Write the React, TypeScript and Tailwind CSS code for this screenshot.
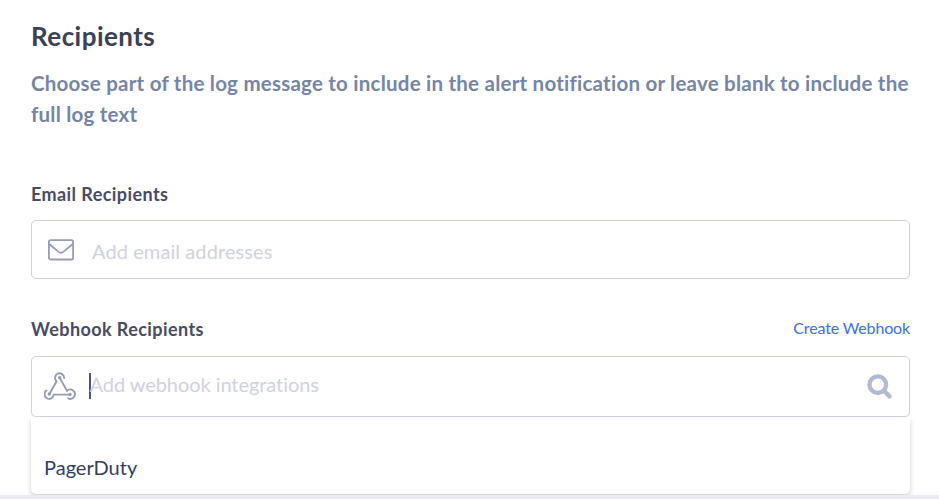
import type { ReactNode } from "react";

const integrations = ["PagerDuty"];

function MailIcon() {
  return (
    <svg width="26" height="22" viewBox="0 0 26 22" fill="none" stroke="#929db8" strokeWidth="1.8">
      <rect x="0.9" y="1.1" width="24.2" height="19.4" rx="1.8" />
      <path d="M1.2 5 L10.7 12.9 Q13 14.7 15.3 12.9 L24.8 5" />
    </svg>
  );
}

function WebhookIcon() {
  return (
    <svg
      width="32"
      height="28"
      viewBox="0 0 32 28"
      fill="none"
      stroke="#929db8"
      strokeWidth="1.9"
      strokeLinecap="round"
      strokeLinejoin="round"
    >
      <path d="M20.1 6 A4.5 4.5 0 1 0 12.6 9.2 L5.4 22" />
      <path d="M2.6 18.4 A4.6 4.6 0 1 0 9.7 22.6 L26 22.6" />
      <path d="M15.7 5.8 L23 18.9 A4.6 4.6 0 1 1 24.2 26.3" />
      <circle cx="15.7" cy="5.8" r="0.8" />
      <circle cx="5.4" cy="22" r="0.8" />
      <circle cx="26" cy="22.5" r="0.8" />
    </svg>
  );
}

function SearchIcon() {
  return (
    <svg width="26" height="26" viewBox="0 0 26 26" fill="none" stroke="#b0bad2" strokeLinecap="round">
      <circle cx="10.8" cy="10.7" r="8.3" strokeWidth="4.3" />
      <path d="M17.5 17.4 L22.6 22.5" strokeWidth="4.4" />
    </svg>
  );
}

function FieldLabel({ children }: { children: ReactNode }) {
  return (
    <label className="text-[18px] leading-[22px] font-bold tracking-[0.42px] text-[#454c63]">{children}</label>
  );
}

export default function App() {
  return (
    <div className="flex h-[499px] flex-col overflow-hidden border-b-4 border-[#e9eaf2] bg-white pt-5 pr-[29px] pl-[31px] font-['Lato',sans-serif]">
      <h1 className="text-[26px] leading-8 font-bold tracking-[0.45px] text-[#3a4056]">Recipients</h1>
      <p className="mt-4 text-[20.5px] leading-[31px] font-bold tracking-[0.23px] whitespace-nowrap text-[#7485a5]">
        Choose part of the log message to include in the alert notification or leave blank to include the
        <br />
        full log text
      </p>

      <section className="mt-[53px]">
        <div className="flex h-6">
          <FieldLabel>Email Recipients</FieldLabel>
        </div>
        <div className="mt-[13px] flex h-[59px] items-center rounded-[5px] border border-[#cdcee1] pl-4">
          <MailIcon />
          <span className="mt-0.5 ml-[18px] text-[20px] tracking-[0.09px] text-[#ced2e1]">Add email addresses</span>
        </div>
      </section>

      <section className="relative mt-[39px]">
        <div className="flex h-6 justify-between">
          <FieldLabel>Webhook Recipients</FieldLabel>
          <a href="#" className="text-[16px] leading-5 tracking-[-0.15px] text-[#3a70ed]">
            Create Webhook
          </a>
        </div>
        <div className="relative z-10 mt-[14px] flex h-[61px] items-center rounded-[5px] border border-[#cdcee1] bg-white pr-4 pb-0.5 pl-3">
          <WebhookIcon />
          <span className="ml-[13px] h-[26px] w-[1.5px] bg-[#4d5271]" />
          <span className="-mt-[3px] -ml-px text-[20px] tracking-[-0.06px] text-[#ced2e1]">Add webhook integrations</span>
          <span className="mt-0.5 ml-auto">
            <SearchIcon />
          </span>
        </div>
        <ul className="absolute top-full left-0 h-[77px] w-full rounded-b-[5px] bg-white pt-[34px] pl-[13px] shadow-[0_3px_5px_rgba(40,45,75,0.22)]">
          {integrations.map((name) => (
            <li key={name} className="text-[20px] leading-8 text-[#334066]">
              {name}
            </li>
          ))}
        </ul>
      </section>
    </div>
  );
}
